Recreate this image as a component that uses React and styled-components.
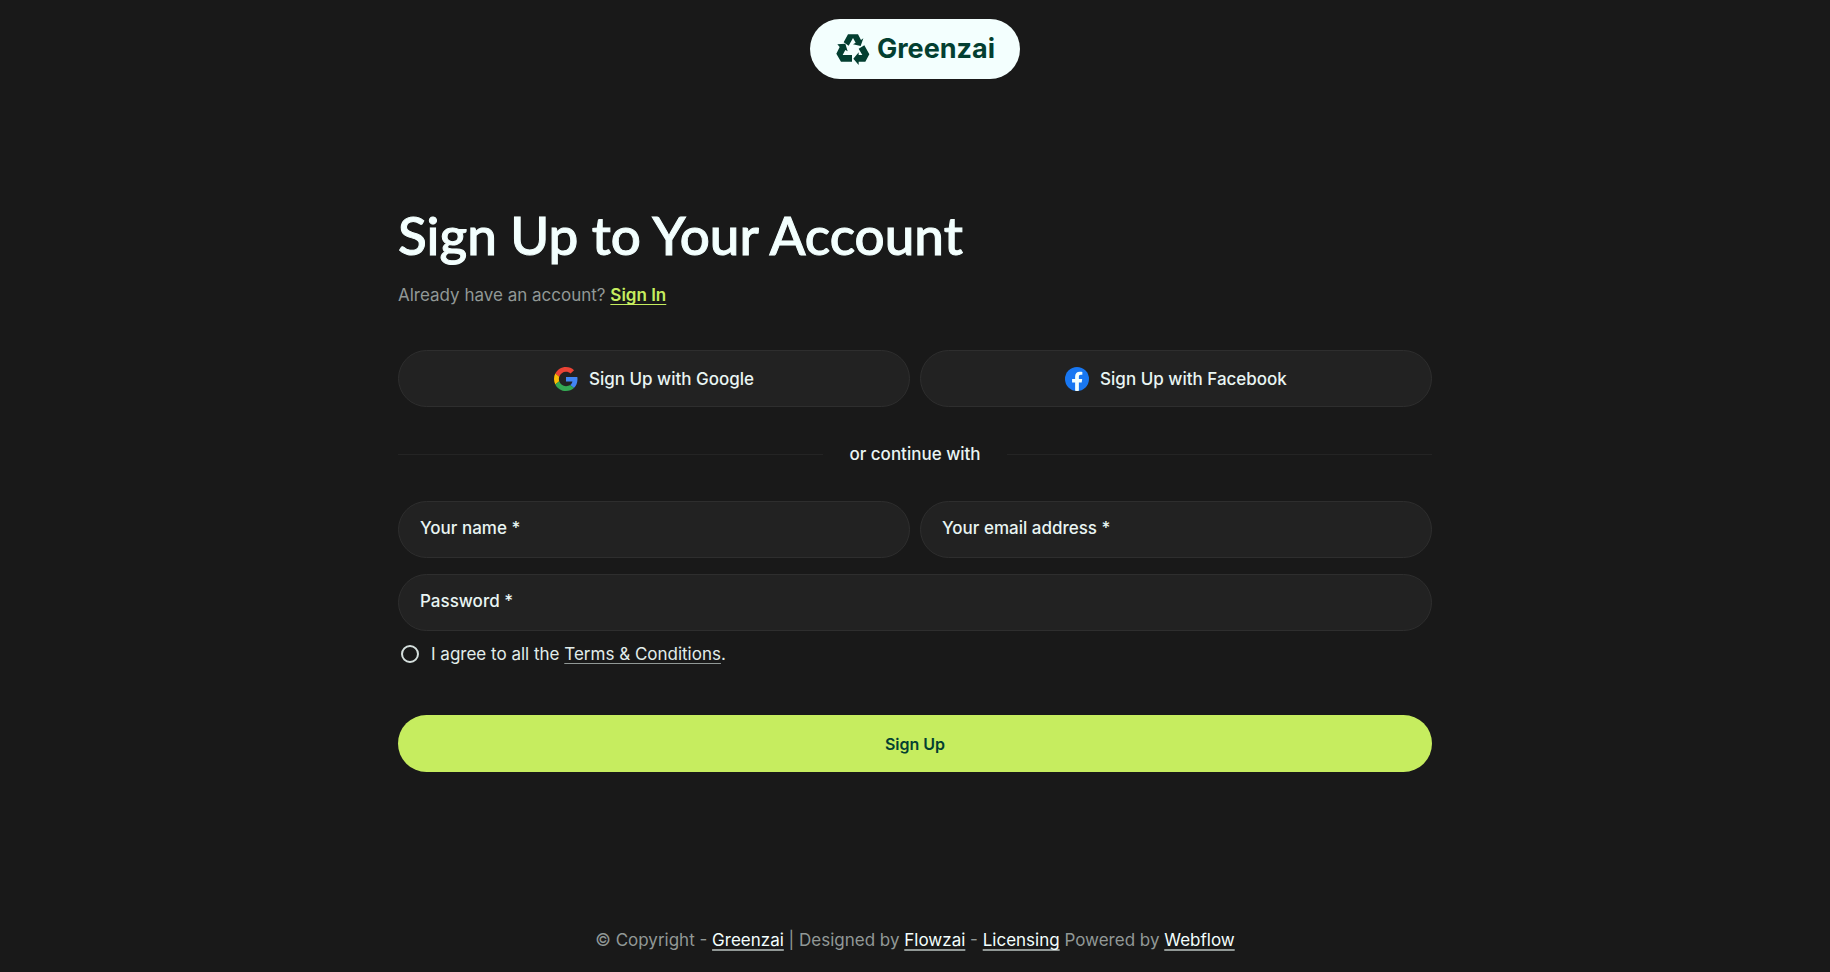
import styled, { createGlobalStyle } from "styled-components";

const GlobalStyle = createGlobalStyle`
  *, *::before, *::after {
    box-sizing: border-box;
  }

  body {
    margin: 0;
    background: #191919;
    color: #f3fffe;
    font-family: Inter, sans-serif;
    font-size: 17px;
    line-height: 24px;
  }
`;

const Page = styled.div`
  min-height: 100vh;
  padding: 19px 24px 20px;
  display: flex;
  flex-direction: column;
  align-items: center;
`;

const LogoLink = styled.a`
  height: 60px;
  padding: 0 25px;
  display: flex;
  align-items: center;
  gap: 6px;
  border-radius: 30px;
  background: #f3fffe;
  color: #033f31;
  font-size: 27px;
  font-weight: 700;
  text-decoration: none;
`;

const Main = styled.main`
  width: 100%;
  max-width: 1034px;
  margin: 124px 0 80px;
`;

const Title = styled.h1`
  margin: 0;
  font-family: Lato, sans-serif;
  font-size: 53px;
  font-weight: 500;
  line-height: 64px;
  -webkit-text-stroke: 1px currentColor;
`;

const Intro = styled.p`
  margin: 16px 0 43px;
  color: #919896;
`;

const SignInLink = styled.a`
  color: #c6ed5f;
  font-weight: 600;
  text-decoration-thickness: 1px;
  text-underline-offset: 3px;
  text-decoration-skip-ink: none;
`;

const Columns = styled.div`
  display: grid;
  grid-template-columns: 1fr 1fr;
  gap: 10px;

  @media screen and (max-width: 640px) {
    grid-template-columns: 1fr;
  }
`;

const SocialButton = styled.button`
  height: 57px;
  display: flex;
  align-items: center;
  justify-content: center;
  gap: 11px;
  border: 1px solid #2e2e2e;
  border-radius: 29px;
  background: #222222;
  color: #e9f5f3;
  font: inherit;
  font-weight: 500;
  cursor: pointer;
`;

const Divider = styled.div`
  margin: 35px 0;
  display: flex;
  align-items: center;
  gap: 26px;
  color: #e9f5f3;
  font-weight: 500;

  &::before,
  &::after {
    content: "";
    flex: 1;
    height: 1px;
    background: #242424;
  }
`;

const Form = styled.form`
  display: flex;
  flex-direction: column;
`;

const Input = styled.input`
  width: 100%;
  height: 57px;
  padding: 0 21px 3px;
  border: 1px solid #2e2e2e;
  border-radius: 29px;
  background: #222222;
  color: #e9f5f3;
  font: inherit;
  font-weight: 500;

  &::placeholder {
    color: #e9f5f3;
    opacity: 1;
  }
`;

const Fields = styled.div`
  display: flex;
  flex-direction: column;
  gap: 16px;
`;

const Agreement = styled.label`
  align-self: flex-start;
  margin: 11px 0 49px;
  padding-left: 3px;
  display: flex;
  align-items: center;
  gap: 12px;
  color: #e2edeb;
`;

const Checkbox = styled.input`
  appearance: none;
  flex: none;
  width: 18px;
  height: 18px;
  margin: 0;
  border: 2px solid #d5dfdd;
  border-radius: 50%;

  &:checked {
    background: #c6ed5f;
  }
`;

const TextLink = styled.a`
  color: ${({ $muted }) => ($muted ? "#e2edeb" : "#f3fffe")};
  text-decoration-color: #919896;
  text-decoration-thickness: ${({ $muted }) => ($muted ? "1px" : "2px")};
  text-underline-offset: 3px;
  text-decoration-skip-ink: none;
`;

const SubmitButton = styled.button`
  height: 57px;
  border: 0;
  border-radius: 29px;
  background: #c6ed5f;
  color: #033f31;
  font: inherit;
  font-size: 16px;
  font-weight: 600;
  cursor: pointer;
`;

const Footer = styled.footer`
  margin-top: auto;
  color: #919896;
  text-align: center;
`;

const RecycleIcon = () => (
  <svg width="36" height="36" viewBox="0 0 108 108" fill="currentColor" aria-hidden="true">
    <path d="M39 10H69L78 27L85 22L77 45L54 40L62 35L54 21L41 44L26 34Z" />
    <path d="M7 40L31 38L38 61L31 57L23 72H51V92H18L4 68L14 48Z" />
    <path d="M71 53L88 43L103 70L91 92H71V102L55 83L71 64V72H82Z" />
  </svg>
);

const GoogleIcon = () => (
  <svg width="24" height="24" viewBox="0 0 48 48" aria-hidden="true">
    <path fill="#ea4335" d="M24 9.5c3.54 0 6.71 1.22 9.21 3.6l6.85-6.85C35.9 2.38 30.47 0 24 0 14.62 0 6.51 5.38 2.56 13.22l7.98 6.19C12.43 13.72 17.74 9.5 24 9.5z" />
    <path fill="#4285f4" d="M46.98 24.55c0-1.57-.15-3.09-.38-4.55H24v9.02h12.94c-.58 2.96-2.26 5.48-4.78 7.18l7.73 6c4.51-4.18 7.09-10.36 7.09-17.65z" />
    <path fill="#fbbc05" d="M10.53 28.59c-.48-1.45-.76-2.99-.76-4.59s.27-3.14.76-4.59l-7.98-6.19C.92 16.46 0 20.12 0 24c0 3.88.92 7.54 2.56 10.78l7.97-6.19z" />
    <path fill="#34a853" d="M24 48c6.48 0 11.93-2.13 15.89-5.81l-7.73-6c-2.15 1.45-4.92 2.3-8.16 2.3-6.26 0-11.57-4.22-13.47-9.91l-7.98 6.19C6.51 42.62 14.62 48 24 48z" />
  </svg>
);

const FacebookIcon = () => (
  <svg width="24" height="24" viewBox="0 0 24 24" aria-hidden="true">
    <circle cx="12" cy="12" r="12" fill="#1877f2" />
    <path fill="#f3fffe" d="M16.67 15.47L17.2 12H13.88V9.75c0-.95.46-1.88 1.95-1.88h1.51V4.92s-1.37-.23-2.68-.23c-2.74 0-4.53 1.66-4.53 4.67V12H7.08v3.47h3.05v8.39a12.1 12.1 0 0 0 3.75 0v-8.39z" />
  </svg>
);

export default function App() {
  return (
    <>
      <GlobalStyle />
      <Page>
        <header>
          <LogoLink href="#">
            <RecycleIcon />
            Greenzai
          </LogoLink>
        </header>

        <Main>
          <Title>Sign Up to Your Account</Title>
          <Intro>
            Already have an account? <SignInLink href="#">Sign In</SignInLink>
          </Intro>

          <Columns>
            <SocialButton type="button">
              <GoogleIcon />
              Sign Up with Google
            </SocialButton>
            <SocialButton type="button">
              <FacebookIcon />
              Sign Up with Facebook
            </SocialButton>
          </Columns>

          <Divider>or continue with</Divider>

          <Form>
            <Fields>
              <Columns>
                <Input type="text" name="name" placeholder="Your name *" aria-label="Your name" required />
                <Input type="email" name="email" placeholder="Your email address *" aria-label="Your email address" required />
              </Columns>
              <Input type="password" name="password" placeholder="Password *" aria-label="Password" required />
            </Fields>
            <Agreement>
              <Checkbox type="checkbox" name="terms" />
              <span>
                I agree to all the <TextLink href="#" $muted>Terms &amp; Conditions</TextLink>.
              </span>
            </Agreement>
            <SubmitButton type="submit">Sign Up</SubmitButton>
          </Form>
        </Main>

        <Footer>
          © Copyright - <TextLink href="#">Greenzai</TextLink> | Designed by{" "}
          <TextLink href="#">Flowzai</TextLink> - <TextLink href="#">Licensing</TextLink> Powered by{" "}
          <TextLink href="#">Webflow</TextLink>
        </Footer>
      </Page>
    </>
  );
}
